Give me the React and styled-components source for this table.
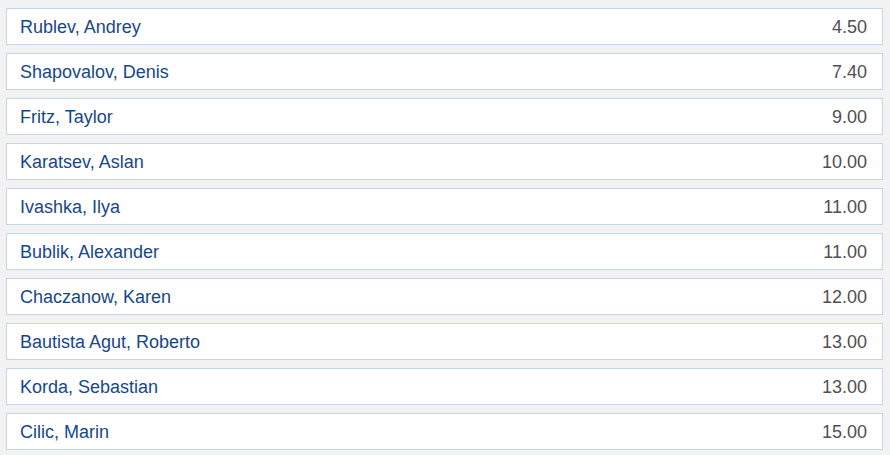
import styled, { createGlobalStyle } from "styled-components";

const GlobalStyle = createGlobalStyle`
    body {
        margin: 0;
        background-color: #f2f2f2;
        font-family: "Liberation Sans", Arial, sans-serif;
    }
`;

const List = styled.div`
    display: flex;
    flex-direction: column;
    gap: 8px;
    padding: 8px 7px 8px 6px;
`;

const Row = styled.div`
    box-sizing: border-box;
    display: flex;
    align-items: center;
    justify-content: space-between;
    height: 37px;
    padding: 1px 15px 0 13px;
    background-color: #fff;
    border: 1px solid #c3d6ea;
    font-size: 18px;
`;

const Name = styled.span`
    color: #17478a;
`;

const Odds = styled.span`
    color: #505050;
`;

const players = [
    ["Rublev, Andrey", "4.50"],
    ["Shapovalov, Denis", "7.40"],
    ["Fritz, Taylor", "9.00"],
    ["Karatsev, Aslan", "10.00"],
    ["Ivashka, Ilya", "11.00"],
    ["Bublik, Alexander", "11.00"],
    ["Chaczanow, Karen", "12.00"],
    ["Bautista Agut, Roberto", "13.00"],
    ["Korda, Sebastian", "13.00"],
    ["Cilic, Marin", "15.00"],
];

const App = () => {
    return (
        <>
            <GlobalStyle />
            <List>
                {players.map(([name, odds]) => (
                    <Row key={name}>
                        <Name>{name}</Name>
                        <Odds>{odds}</Odds>
                    </Row>
                ))}
            </List>
        </>
    )
}

export default App;
